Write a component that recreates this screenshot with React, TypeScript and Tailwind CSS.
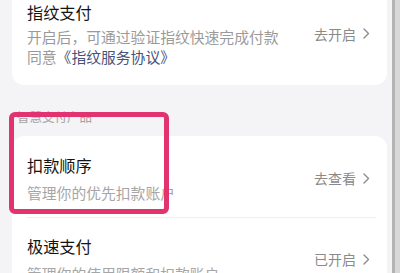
import React from "react";

const font = { fontFamily: '"Noto Sans CJK SC", "Noto Sans", sans-serif' };

function Chevron() {
  return (
    <svg width="7" height="11" viewBox="0 0 7 11" className="ml-[7px]">
      <polyline points="1,1 5.5,5.5 1,10" fill="none" stroke="#8c8c8c" strokeWidth="1.4" strokeLinecap="round" strokeLinejoin="round" />
    </svg>
  );
}

function Action({ label }: { label: string }) {
  return (
    <div className="flex items-center shrink-0 text-[14px] leading-[20px] text-[#8a8a8a]">
      <span>{label}</span>
      <Chevron />
    </div>
  );
}

export default function App() {
  return (
    <div className="w-[400px] h-[273px] overflow-hidden flex" style={font}>
      <div className="w-[392px] h-full bg-[#f4f3f6] relative">
        {/* Card 1 */}
        <div className="-mt-[16px] ml-[12px] w-[375px] bg-white rounded-[12px] flex items-center pl-[15px] pr-[17px] pt-[16px] pb-[18px]">
          <div className="flex-1 min-w-0">
            <div className="text-[16.2px] leading-[24px] text-[#141414]">指纹支付</div>
            <div className="mt-[3px] text-[14.8px] leading-[20px] text-[#9a9a9a]">
              <div>开启后，可通过验证指纹快速完成付款</div>
              <div>
                同意<span className="text-[#46527a]">《指纹服务协议》</span>
              </div>
            </div>
          </div>
          <Action label="去开启" />
        </div>

        {/* Section header */}
        <div className="mt-[23px] mb-[10px] pl-[17px] text-[12.5px] leading-[18px] text-[#a3a3a3]">智慧支付产品</div>

        {/* Card 2 */}
        <div className="ml-[12px] w-[375px] bg-white rounded-[12px]">
          <div className="flex items-center pl-[15px] pr-[17px] pt-[17px] pb-[14px]">
            <div className="flex-1 min-w-0">
              <div className="text-[16.2px] leading-[24px] text-[#141414]">扣款顺序</div>
              <div className="mt-[6px] text-[14.8px] leading-[20px] text-[#a6a6a6]">管理你的优先扣款账户</div>
            </div>
            <Action label="去查看" />
          </div>
          <div className="ml-[15px] mr-[11px] h-px bg-[#efefef]" />
          <div className="flex items-center pl-[15px] pr-[17px] pt-[16px] pb-[16px]">
            <div className="flex-1 min-w-0">
              <div className="text-[16.2px] leading-[24px] text-[#141414]">极速支付</div>
              <div className="mt-[6px] text-[14.8px] leading-[20px] text-[#a6a6a6]">管理你的使用限额和扣款账户</div>
            </div>
            <Action label="已开启" />
          </div>
        </div>

        {/* Highlight box overlay */}
        <div className="absolute left-[9px] top-[112px] w-[160px] h-[102px] border-[5px] border-[#e0336f] rounded-[6px] pointer-events-none" />
      </div>
      <div className="w-[3px] h-full bg-[#b4b4b4]" />
      <div className="w-[5px] h-full bg-[#d8d8d8]" />
    </div>
  );
}
